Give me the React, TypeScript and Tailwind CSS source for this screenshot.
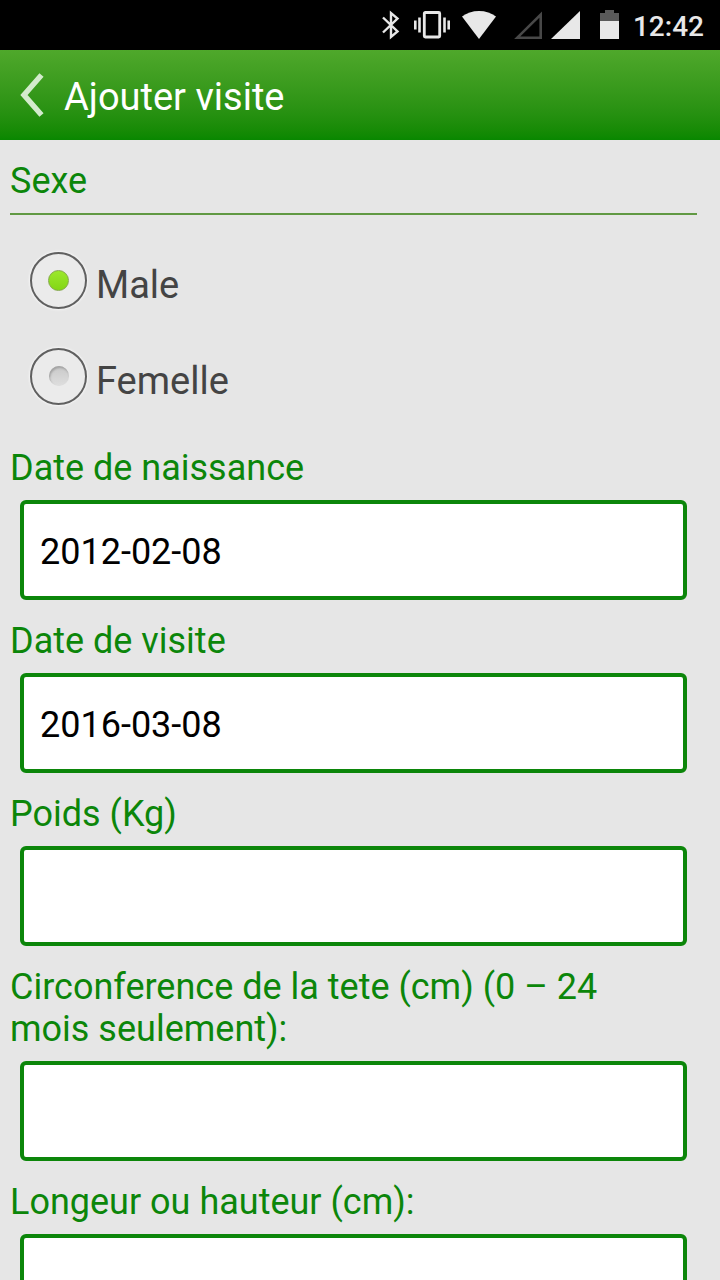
import { useState } from "react";

type Sex = "male" | "female";

const sexOptions: { value: Sex; label: string }[] = [
  { value: "male", label: "Male" },
  { value: "female", label: "Femelle" },
];

const fields = [
  { id: "birthDate", label: "Date de naissance" },
  { id: "visitDate", label: "Date de visite" },
  { id: "weight", label: "Poids (Kg)" },
  { id: "headCircumference", label: "Circonference de la tete (cm) (0 – 24 mois seulement):" },
  { id: "height", label: "Longeur ou hauteur (cm):" },
];

function StatusBar() {
  return (
    <div className="flex h-[50px] shrink-0 items-center justify-end bg-black pr-4 text-[#e8e8e8]">
      <svg width="18" height="30" viewBox="0 0 18 30" className="mr-3.5" aria-hidden="true">
        <path
          d="M1 7.5L15.5 21.5L9 27V3L15.5 8.5L1 22.5"
          fill="none"
          stroke="currentColor"
          strokeWidth="2.4"
        />
      </svg>
      <svg width="36" height="30" viewBox="0 0 36 30" className="mr-3" aria-hidden="true">
        <rect x="10.3" y="2.5" width="15.4" height="24.5" rx="1" fill="none" stroke="currentColor" strokeWidth="2.8" />
        <path d="M0 10.5h2.6v9H0zM4.2 7.5h2.6v15H4.2zM29.2 7.5h2.6v15h-2.6zM33.4 10.5H36v9h-2.6z" fill="currentColor" />
      </svg>
      <svg width="34" height="30" viewBox="0 0 34 30" className="mr-[18px]" aria-hidden="true">
        <path d="M0 6.5C4.5 3 10.5 1 17 1s12.5 2 17 5.5L17 29z" fill="currentColor" />
      </svg>
      <svg width="29" height="30" viewBox="0 0 29 30" className="mr-2" aria-hidden="true">
        <path d="M3.3 27.7H26.7V4.5z" fill="none" stroke="#484848" strokeWidth="2.6" />
      </svg>
      <svg width="29" height="30" viewBox="0 0 29 30" className="mr-5" aria-hidden="true">
        <path d="M0 29H29V1z" fill="currentColor" />
      </svg>
      <svg width="19" height="30" viewBox="0 0 19 30" className="mr-3.5" aria-hidden="true">
        <path d="M5 0h9v3h5v8H0V3h5z" fill="#5a5a5a" />
        <path d="M0 11h19v18H0z" fill="currentColor" />
      </svg>
      <span className="pt-1 text-[28px] leading-8 font-medium">12:42</span>
    </div>
  );
}

export default function App() {
  const [sex, setSex] = useState<Sex>("male");
  const [formData, setFormData] = useState<Record<string, string>>({
    birthDate: "2012-02-08",
    visitDate: "2016-03-08",
    weight: "",
    headCircumference: "",
    height: "",
  });

  return (
    <div className="flex h-screen flex-col overflow-hidden bg-[#e6e6e6] font-[Roboto,sans-serif]">
      <StatusBar />

      <header className="flex h-[90px] shrink-0 items-center bg-linear-to-b from-[#4fa82b] to-[#088700] pl-5 text-white">
        <button type="button" aria-label="Retour" className="mr-5">
          <svg width="24" height="44" viewBox="0 0 24 44" aria-hidden="true">
            <path d="M21.5 2L4 22L21.5 42" fill="none" stroke="#d3ebcc" strokeWidth="5.5" />
          </svg>
        </button>
        <h1 className="pt-1 text-[38px] leading-11">Ajouter visite</h1>
      </header>

      <main className="flex-1 overflow-y-auto pt-5 pr-[23px] pb-5 pl-2.5 [scrollbar-width:none]">
        <form onSubmit={(e) => e.preventDefault()}>
          <fieldset className="mb-[23px]">
            <legend className="w-full border-b-2 border-[#619943] pb-[11px] text-[36px] leading-[42px] text-[#0c860a]">
              Sexe
            </legend>
            <div className="pt-[17px] pl-5">
              {sexOptions.map((option) => (
                <label
                  key={option.value}
                  className="flex h-24 items-center gap-[9px] text-[38px] leading-11 text-[#444444]"
                >
                  <input
                    type="radio"
                    name="sex"
                    value={option.value}
                    checked={sex === option.value}
                    onChange={() => setSex(option.value)}
                    className="grid size-[57px] appearance-none place-content-center rounded-full border-2 border-[#606060] bg-[#ebebeb] shadow-[0_0_2px_1px_#f6f6f6] before:size-5 before:rounded-full before:bg-linear-to-b before:from-[#c9c9c9] before:to-[#dedede] before:shadow-[inset_1px_2px_2px_#a3a3a3] checked:before:size-[21px] checked:before:border checked:before:border-[#83a848] checked:before:from-[#9be82b] checked:before:to-[#84d614] checked:before:shadow-none"
                  />
                  <span className="pt-2.5">{option.label}</span>
                </label>
              ))}
            </div>
          </fieldset>

          <div className="space-y-5">
            {fields.map((field) => (
              <div key={field.id} className="pr-2.5">
                <label
                  htmlFor={field.id}
                  className="mb-[11px] block pr-5 text-[36px] leading-[42px] text-[#0c860a]"
                >
                  {field.label}
                </label>
                <div className="pl-2.5">
                  <input
                    id={field.id}
                    type="text"
                    value={formData[field.id]}
                    onChange={(e) => setFormData({ ...formData, [field.id]: e.target.value })}
                    className="block h-[100px] w-full rounded-md border-4 border-[#0c860a] bg-white px-4 pt-1 text-[36px] text-black outline-none"
                  />
                </div>
              </div>
            ))}
          </div>
        </form>
      </main>
    </div>
  );
}
